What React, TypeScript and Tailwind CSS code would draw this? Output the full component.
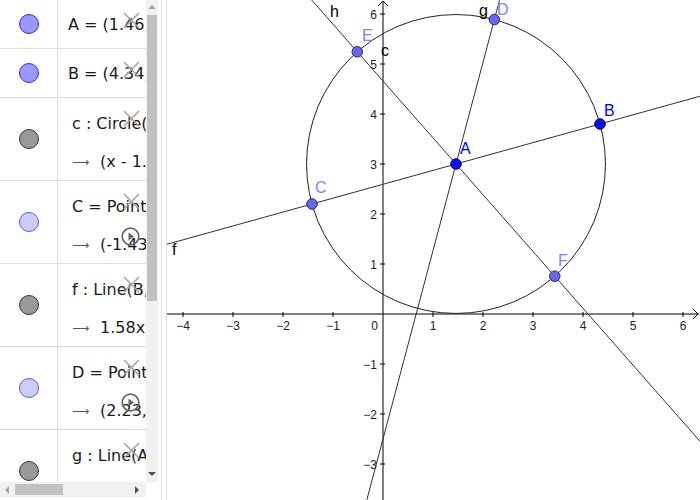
import React from "react"

// graph coordinate mapping (page pixels)
const U = 50
const OX = 383
const OY = 314
const px = (x: number) => OX + U * x
const py = (y: number) => OY - U * y

type Pt = { x: number; y: number }

const A: Pt = { x: 1.46, y: 3 }
const B: Pt = { x: 4.34, y: 3.8 }
const r = Math.hypot(B.x - A.x, B.y - A.y)
const C: Pt = { x: 2 * A.x - B.x, y: 2 * A.y - B.y }
const dD = { x: 0.2566, y: 0.9665 }
const D: Pt = { x: A.x + r * dD.x, y: A.y + r * dD.y }
const dH = { x: 0.6606, y: -0.7507 }
const E: Pt = { x: A.x - r * dH.x, y: A.y - r * dH.y }
const F: Pt = { x: A.x + r * dH.x, y: A.y + r * dH.y }

const longLine = (p: Pt, q: Pt) => {
  const dx = q.x - p.x
  const dy = q.y - p.y
  const k = 30
  return {
    x1: px(p.x - k * dx),
    y1: py(p.y - k * dy),
    x2: px(p.x + k * dx),
    y2: py(p.y + k * dy),
  }
}

interface Row {
  icon: "free" | "dep" | "obj"
  h: string
  lines: string[]
  play?: boolean
}

const rows: Row[] = [
  { icon: "free", h: "h-[49px]", lines: ["A = (1.46, 3)"] },
  { icon: "free", h: "h-[49px]", lines: ["B = (4.34, 3.8)"] },
  { icon: "obj", h: "h-[83px]", lines: ["c : Circle(A, B)", "(x - 1.46)² + (y - 3)² = 8.93"] },
  { icon: "dep", h: "h-[83px]", lines: ["C = Point(c)", "(-1.43, 2.2)"], play: true },
  { icon: "obj", h: "h-[83px]", lines: ["f : Line(B, C)", "1.58x - 5.77y = -10.59"] },
  { icon: "dep", h: "h-[83px]", lines: ["D = Point(c)", "(2.23, 5.89)"], play: true },
  { icon: "obj", h: "h-[83px]", lines: ["g : Line(A, D)", "-2.89x + 0.77y = -1.9"] },
]

const iconClass = {
  free: "bg-[#9999ff] border-[#2a2aff]",
  dep: "bg-[#ccccff] border-[#5a5ae6]",
  obj: "bg-[#999999] border-[#333333]",
}

function DeleteCross() {
  return (
    <svg className="absolute left-[123px] top-[12px]" width="17" height="17" viewBox="0 0 17 17">
      <path d="M1 1 L16 16 M16 1 L1 16" stroke="#a6a6a6" strokeWidth="1.6" />
    </svg>
  )
}

function PlayButton() {
  return (
    <svg className="absolute left-[121px] top-[46px]" width="19" height="19" viewBox="0 0 19 19">
      <circle cx="9.5" cy="9.5" r="8.3" fill="none" stroke="#666" strokeWidth="1.7" />
      <path d="M7.5 5.5 L13 9.5 L7.5 13.5 Z" fill="#666" />
    </svg>
  )
}

function AlgebraRow({ row }: { row: Row }) {
  const single = row.lines.length === 1
  return (
    <div className={`relative flex shrink-0 border-b border-[#dcdcdc] ${row.h}`}>
      <div className="flex w-[58px] shrink-0 items-center justify-center border-r border-[#dcdcdc]">
        <div className={`h-[20px] w-[20px] rounded-full border-[1.5px] ${iconClass[row.icon]}`} />
      </div>
      {single ? (
        <div className="flex items-center overflow-hidden whitespace-nowrap pl-[10px] pt-[2px] text-[16px] text-[#1a1a1a]">
          {row.lines[0]}
        </div>
      ) : (
        <div className="flex min-w-0 flex-col overflow-hidden whitespace-nowrap pl-[14px] pt-[16px] text-[16px] leading-[20px] text-[#1a1a1a]">
          <div>{row.lines[0]}</div>
          <div className="mt-[18px] flex items-center">
            <span className="w-[28px] shrink-0 text-[12px] text-[#555]">⟶</span>
            <span className="shrink-0">{row.lines[1]}</span>
          </div>
        </div>
      )}
      <DeleteCross />
      {row.play && <PlayButton />}
    </div>
  )
}

function AlgebraView() {
  return (
    <div className="flex h-[500px] w-[161px] shrink-0 flex-col bg-white font-['DejaVu_Sans',sans-serif]">
      <div className="flex h-[482px]">
        <div className="flex w-[146px] flex-col overflow-hidden">
          {rows.map((row, i) => (
            <AlgebraRow key={i} row={row} />
          ))}
        </div>
        <div className="relative flex w-[12px] flex-col items-center bg-[#f1f1f1]">
          <div className="mt-[5px] h-0 w-0 border-x-[4px] border-b-[4px] border-x-transparent border-b-[#a3a3a3]" />
          <div className="mt-[6px] h-[286px] w-[10px] bg-[#c1c1c1]" />
          <div className="mt-auto mb-[6px] h-0 w-0 border-x-[4px] border-t-[4px] border-x-transparent border-t-[#505050]" />
        </div>
      </div>
      <div className="flex h-[15px]">
        <div className="flex w-[146px] items-center bg-[#f1f1f1]">
          <div className="ml-[5px] h-0 w-0 border-y-[4px] border-r-[4px] border-y-transparent border-r-[#a3a3a3]" />
          <div className="ml-[6px] h-[11px] w-[48px] bg-[#c1c1c1]" />
          <div className="ml-auto mr-[7px] h-0 w-0 border-y-[4px] border-l-[4px] border-y-transparent border-l-[#505050]" />
        </div>
      </div>
    </div>
  )
}

function Graphics() {
  const xTicks = [-4, -3, -2, -1, 1, 2, 3, 4, 5, 6]
  const yTicks = [-3, -2, -1, 1, 2, 3, 4, 5, 6]
  const lf = longLine(A, B)
  const lg = longLine(A, D)
  const lh = longLine(A, E)
  const lineStroke = "#333"
  const depPoint = (p: Pt, key: string) => (
    <circle key={key} cx={px(p.x)} cy={py(p.y)} r="5.3" fill="#6666f5" stroke="#222" strokeWidth="0.9" />
  )
  return (
    <svg width="533" height="500" viewBox="167 0 533 500" className="block overflow-hidden bg-white">
      {/* axes */}
      <line x1="167" y1={OY} x2="699" y2={OY} stroke="#000" strokeWidth="1" />
      <path d={`M693 ${OY - 5} L698 ${OY} L693 ${OY + 5}`} fill="none" stroke="#000" strokeWidth="1" />
      <line x1={OX} y1="1" x2={OX} y2="500" stroke="#000" strokeWidth="1" />
      <path d={`M${OX - 5} 6 L${OX} 1 L${OX + 5} 6`} fill="none" stroke="#000" strokeWidth="1" />
      {xTicks.map((k) => (
        <g key={`x${k}`}>
          <line x1={px(k)} y1={OY - 2} x2={px(k)} y2={OY + 3} stroke="#000" />
          <text x={px(k)} y="330" textAnchor="middle" fontSize="12" fill="#222" fontFamily="Liberation Sans, Arial, sans-serif">
            {k < 0 ? `−${-k}` : k}
          </text>
        </g>
      ))}
      <text x="378" y="330" textAnchor="end" fontSize="12" fill="#222" fontFamily="Liberation Sans, Arial, sans-serif">
        0
      </text>
      {yTicks.map((k) => (
        <g key={`y${k}`}>
          <line x1={OX - 3} y1={py(k)} x2={OX + 2} y2={py(k)} stroke="#000" />
          <text x="377" y={py(k) + 4.5} textAnchor="end" fontSize="12" fill="#222" fontFamily="Liberation Sans, Arial, sans-serif">
            {k < 0 ? `−${-k}` : k}
          </text>
        </g>
      ))}

      {/* objects */}
      <circle cx={px(A.x)} cy={py(A.y)} r={r * U} fill="none" stroke="#222" strokeWidth="1" />
      <line {...lf} stroke={lineStroke} strokeWidth="1" />
      <line {...lg} stroke={lineStroke} strokeWidth="1" />
      <line {...lh} stroke={lineStroke} strokeWidth="1" />

      {depPoint(C, "C")}
      {depPoint(D, "D")}
      {depPoint(E, "E")}
      {depPoint(F, "F")}
      <circle cx={px(A.x)} cy={py(A.y)} r="5.3" fill="#0c0cf0" stroke="#000040" strokeWidth="0.9" />
      <circle cx={px(B.x)} cy={py(B.y)} r="5.3" fill="#0c0cf0" stroke="#000040" strokeWidth="0.9" />

      {/* labels */}
      <g fontSize="16" fontFamily="Liberation Sans, Arial, sans-serif">
        <text x="330" y="17" fill="#000">h</text>
        <text x="479" y="16" fill="#000">g</text>
        <text x="497" y="15" fill="#7f7fff">D</text>
        <text x="362" y="41" fill="#7f7fff">E</text>
        <text x="381" y="56" fill="#000">c</text>
        <text x="460" y="154" fill="#0000ff">A</text>
        <text x="604" y="116" fill="#0000ff">B</text>
        <text x="315" y="193" fill="#7f7fff">C</text>
        <text x="558" y="266" fill="#7f7fff">F</text>
        <text x="172" y="255" fill="#000">f</text>
      </g>
    </svg>
  )
}

export default function App() {
  return (
    <div className="flex h-[500px] w-[700px] overflow-hidden bg-white">
      <AlgebraView />
      <div className="w-[6px] shrink-0 border-x border-[#dedede] bg-white" />
      <Graphics />
    </div>
  )
}
